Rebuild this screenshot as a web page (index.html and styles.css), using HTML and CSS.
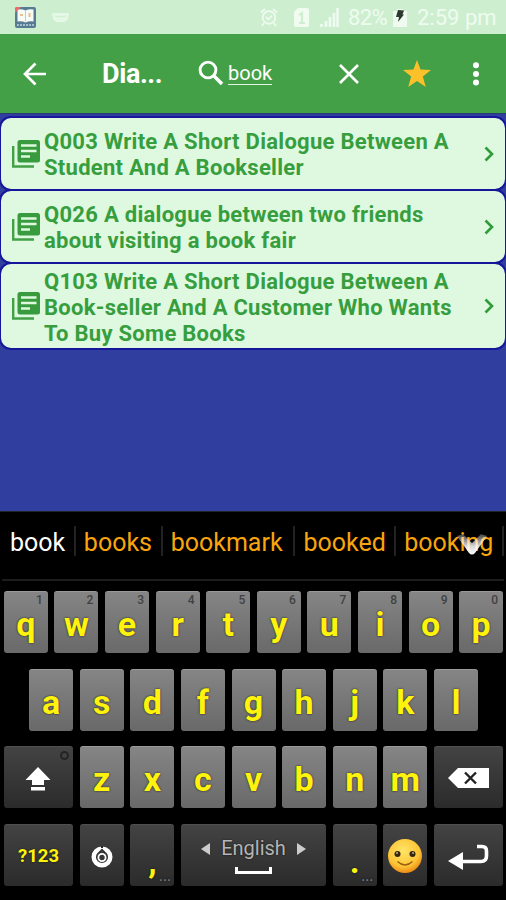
FILE: index.html
```html
<!DOCTYPE html>
<html lang="en">
<head>
    <meta charset="UTF-8">
    <title>Dialogue</title>
    <link rel="stylesheet" href="styles.css">
</head>
<body>
<svg class="defs">
    <symbol id="pages" viewBox="0 0 28 28">
        <path d="M1.200 6v20.500H22" fill="none" stroke="#43a047" stroke-width="2.400"/>
        <rect x="5.500" y="0" width="22.500" height="22.500" rx="2.500" fill="#389c3e"/>
        <path d="M9 5.500h15.500M9 11h15.500M9 16.500h9" stroke="#dff8e0" stroke-width="2.300"/>
    </symbol>
    <symbol id="next" viewBox="0 0 10 16">
        <path d="M1.500 1.500L8 8l-6.500 6.500" fill="none" stroke="#2f9c38" stroke-width="2.600"/>
    </symbol>
</svg>

<div class="status">
    <svg class="app-icon" width="21" height="21" viewBox="0 0 21 21">
        <rect width="21" height="21" rx="2" fill="#587b94"/>
        <path d="M2.500 2.500q4-1 8 1 4-2 8-1v12q-4-1-8 1-4-2-8-1z" fill="#f7fbf5"/>
        <path d="M10.500 3.500v11" stroke="#b9ccd2"/>
        <path d="M0 2q0-2 2-2h4L0 6z" fill="#ee6a66"/>
        <path d="M5 8h3M14.500 6v4" stroke="#e9c08c" stroke-width="2"/>
        <path d="M2 18h17" stroke="#a3bfce" stroke-width="2" stroke-dasharray="2 1"/>
    </svg>
    <svg class="mail-icon" width="17" height="11" viewBox="0 0 17 11">
        <path d="M0 1h17l-1 6-3 3H4L1 7z" fill="#e4f8e5"/>
        <path d="M3 4q5.500 2 11 0" fill="none" stroke="#cdefcf"/>
    </svg>
    <div class="status-right">
        <svg width="18" height="20" viewBox="0 0 18 20">
            <g fill="none" stroke="#effbf0" stroke-width="1.800">
                <circle cx="9" cy="10.500" r="6.300"/>
                <path d="M1 5.500l4-3.500M17 5.500L13 2M4 16l-2 3M14 16l2 3M6 10l2.500 2.500L12 8.500"/>
            </g>
        </svg>
        <svg class="sim" width="15" height="19" viewBox="0 0 15 19">
            <path d="M4 0h9q2 0 2 2v15q0 2-2 2H2q-2 0-2-2V4z" fill="#f1fcf1"/>
            <path d="M5 7l3-2v10M5 15h6" fill="none" stroke="#cdefcf" stroke-width="2"/>
        </svg>
        <svg class="signal" width="19" height="19" viewBox="0 0 19 19">
            <path d="M1.500 16v3M6 13v6M10 9v10M14 5v14M17.500 0v19" stroke="#effbf0" stroke-width="2.600"/>
        </svg>
        <span class="percent">82%</span>
        <svg class="battery" width="14" height="19" viewBox="0 0 14 19">
            <path d="M4 1h6v2h4v16H0V3h4z" fill="#effbf0"/>
            <path d="M5 2l6 .500-1.500 4H11L5 14l1-5H3z" fill="#2b3a2c"/>
        </svg>
        <span class="clock">2:59 pm</span>
    </div>
</div>

<div class="toolbar">
    <svg class="back" width="24" height="24" viewBox="0 0 24 24">
        <path d="M23 12H2M12.500 1.500L2 12l10.500 10.500" fill="none" stroke="#fff" stroke-width="2.700"/>
    </svg>
    <h1>Dia...</h1>
    <svg class="search" width="26" height="26" viewBox="0 0 26 26">
        <circle cx="10" cy="10" r="7.900" fill="none" stroke="#fff" stroke-width="2.900"/>
        <path d="M15.500 15.500l8.500 8.500" stroke="#fff" stroke-width="3.500"/>
    </svg>
    <span class="query">book</span>
    <svg class="clear" width="20" height="20" viewBox="0 0 20 20">
        <path d="M1 1l18 18M19 1L1 19" stroke="#fff" stroke-width="2.600"/>
    </svg>
    <svg class="star" width="28" height="27" viewBox="0 0 28 27">
        <path d="M14 0l3.500 9.500 10.500.500-8.200 6.500L22.800 27 14 21 5.200 27l3-10.500L0 10l10.500-.500z" fill="#fcc02b"/>
    </svg>
    <svg class="more" width="6" height="24" viewBox="0 0 6 24">
        <g fill="#fff"><circle cx="3" cy="3.200" r="3"/><circle cx="3" cy="12" r="3"/><circle cx="3" cy="20.500" r="3"/></g>
    </svg>
</div>

<ul class="list">
    <li>
        <svg class="pages"><use href="#pages"/></svg>
        <p>Q003 Write A Short Dialogue Between A<br>Student And A Bookseller</p>
        <svg class="next"><use href="#next"/></svg>
    </li>
    <li>
        <svg class="pages"><use href="#pages"/></svg>
        <p>Q026 A dialogue between two friends<br>about visiting a book fair</p>
        <svg class="next"><use href="#next"/></svg>
    </li>
    <li class="tall">
        <svg class="pages"><use href="#pages"/></svg>
        <p>Q103 Write A Short Dialogue Between A<br>Book-seller And A Customer Who Wants<br>To Buy Some Books</p>
        <svg class="next"><use href="#next"/></svg>
    </li>
</ul>

<div class="keyboard">
    <div class="suggest">
        <span class="w1 typed">book</span>
        <span class="w2">books</span>
        <span class="w3">bookmark</span>
        <span class="w4">booked</span>
        <span class="w5">booking
            <svg class="expand" width="36" height="24" viewBox="0 0 36 24">
                <defs>
                    <linearGradient id="fade" x1="0" y1="0" x2="0" y2="1">
                        <stop offset="0" stop-color="#fff" stop-opacity=".25"/>
                        <stop offset=".6" stop-color="#fff" stop-opacity=".85"/>
                        <stop offset="1" stop-color="#fff"/>
                    </linearGradient>
                </defs>
                <path d="M3 3l6-2 9 9 9-9 6 2-12 17q-3 3-6 0z" fill="url(#fade)"/>
            </svg>
        </span>
    </div>
    <div class="row">
        <div class="key">q<sup>1</sup></div>
        <div class="key">w<sup>2</sup></div>
        <div class="key">e<sup>3</sup></div>
        <div class="key">r<sup>4</sup></div>
        <div class="key">t<sup>5</sup></div>
        <div class="key">y<sup>6</sup></div>
        <div class="key">u<sup>7</sup></div>
        <div class="key">i<sup>8</sup></div>
        <div class="key">o<sup>9</sup></div>
        <div class="key">p<sup>0</sup></div>
    </div>
    <div class="row">
        <div class="key">a</div>
        <div class="key">s</div>
        <div class="key">d</div>
        <div class="key">f</div>
        <div class="key">g</div>
        <div class="key">h</div>
        <div class="key">j</div>
        <div class="key">k</div>
        <div class="key">l</div>
    </div>
    <div class="row">
        <div class="key dark wide">
            <svg width="26" height="26" viewBox="0 0 26 26">
                <path d="M13 1l12.500 13H19v5H7v-5H.500zM6 21h14v3.500H6z" fill="#fff"/>
            </svg>
            <i class="lamp"></i>
        </div>
        <div class="key">z</div>
        <div class="key">x</div>
        <div class="key">c</div>
        <div class="key">v</div>
        <div class="key">b</div>
        <div class="key">n</div>
        <div class="key">m</div>
        <div class="key dark wide">
            <svg class="delete" width="41" height="20" viewBox="0 0 41 20">
                <path d="M0 10L10 0h31v20H10z" fill="#fff"/>
                <path d="M17 4.500l11 11M28 4.500l-11 11" stroke="#222" stroke-width="2.400"/>
            </svg>
        </div>
    </div>
    <div class="row">
        <div class="key dark wide num">?123</div>
        <div class="key dark">
            <svg class="gear" width="22" height="22" viewBox="0 0 22 22">
                <circle cx="11" cy="11" r="8.300" fill="none" stroke="#fff" stroke-width="4.400"/>
                <circle cx="11" cy="11.500" r="3.600" fill="none" stroke="#fff" stroke-width="1.800"/>
                <path d="M8 6.800L11 3.500l3 3.300" fill="none" stroke="#292929" stroke-width="1.400"/>
                <path d="M11 0v2" stroke="#292929" stroke-width="2"/>
            </svg>
        </div>
        <div class="key dark comma">,<small>...</small></div>
        <div class="key dark space">
            <div class="lang">
                <svg width="9" height="12" viewBox="0 0 9 12"><path d="M9 0v12L0 6z" fill="#ccc"/></svg>
                <span>English</span>
                <svg width="9" height="12" viewBox="0 0 9 12"><path d="M0 0v12l9-6z" fill="#ccc"/></svg>
            </div>
            <svg class="bar" width="37" height="8" viewBox="0 0 37 8"><path d="M1.500 0v5.500h34V0" fill="none" stroke="#fff" stroke-width="3"/></svg>
        </div>
        <div class="key dark dot">.<small>...</small></div>
        <div class="key dark">
            <svg class="smile" width="34" height="34" viewBox="0 0 34 34">
                <defs>
                    <radialGradient id="face" cx=".45" cy=".35" r=".65">
                        <stop offset="0" stop-color="#ffe567"/>
                        <stop offset=".7" stop-color="#fdc536"/>
                        <stop offset="1" stop-color="#ed8b16"/>
                    </radialGradient>
                </defs>
                <circle cx="17" cy="17" r="17" fill="url(#face)"/>
                <circle cx="9.500" cy="15" r="3" fill="#36250f"/>
                <circle cx="24.500" cy="15" r="3" fill="#36250f"/>
                <circle cx="9" cy="14" r="1" fill="#bfae8b"/>
                <circle cx="25" cy="14" r="1" fill="#bfae8b"/>
                <path d="M9.500 22.500q7.500 7 15 0" fill="none" stroke="#9a5d12" stroke-width="1.500"/>
            </svg>
        </div>
        <div class="key dark wide">
            <svg class="enter" width="42" height="27" viewBox="0 0 42 27">
                <path d="M0 17L15 8v18z" fill="#fff"/>
                <path d="M13 17.500h20q5.500 0 5.500-5.500V7q0-4.500-4.500-4.500h-5" fill="none" stroke="#fff" stroke-width="3.600"/>
            </svg>
        </div>
    </div>
</div>
</body>
</html>
```
FILE: styles.css
```css
*{
    margin: 0;
    padding: 0;
    box-sizing: border-box;
    list-style: none;
}
body{
    width: 506px;
    height: 900px;
    overflow: hidden;
    display: flex;
    flex-direction: column;
    background: #303f9f;
    font-family: Roboto, "Liberation Sans", sans-serif;
}
svg{
    display: block;
    flex: none;
}
.defs{
    display: none;
}
/* status bar */
.status{
    height: 34px;
    padding: 0 11px 0 15px;
    display: flex;
    align-items: center;
    background: #cdefcf;
    color: #effbf0;
    font-size: 22px;
}
.mail-icon{
    margin-left: 16px;
}
.status-right{
    margin-left: auto;
    display: flex;
    align-items: center;
    line-height: 36px;
    white-space: nowrap;
}
.sim{
    margin-left: 16px;
}
.signal{
    margin-left: 11px;
}
.percent{
    width: 40px;
    margin-left: 9px;
    padding-top: 2px;
    letter-spacing: -.6px;
}
.battery{
    margin-left: 5px;
}
.clock{
    width: 78px;
    margin-left: 10px;
    padding-top: 2px;
}
/* toolbar */
.toolbar{
    height: 79px;
    padding-left: 23px;
    display: flex;
    align-items: center;
    background: #43a047;
    color: #fff;
}
.toolbar h1{
    width: 60px;
    margin-left: 55px;
    padding-top: 1px;
    font-size: 27px;
    font-weight: 700;
    letter-spacing: -.4px;
    white-space: nowrap;
}
.search{
    margin-left: 36px;
    margin-top: -2px;
}
.query{
    width: 44px;
    margin-left: 4px;
    margin-top: 1px;
    border-bottom: 1px solid #dff3df;
    font-size: 20px;
    line-height: 21px;
}
.clear{
    margin-left: 67px;
}
.star{
    margin-left: 44px;
}
.more{
    margin-left: 42px;
}
/* results */
.list{
    height: 398px;
    padding: 4px 1px 0;
    border-top: 1px solid #263a74;
    background: #303f9f;
}
.list li{
    height: 71px;
    margin-bottom: 2px;
    padding: 0 11px;
    display: flex;
    align-items: center;
    border-radius: 10px;
    background: #dff8e0;
    box-shadow: 0 0 0 2px #15169a;
}
.list .tall{
    height: 84px;
}
.list p{
    flex: 1;
    margin-left: 4px;
    padding-top: 3px;
    color: #379e3e;
    font-size: 22px;
    line-height: 26px;
    font-weight: 700;
    letter-spacing: .28px;
    white-space: nowrap;
}
.pages{
    width: 28px;
    height: 28px;
}
.next{
    width: 10px;
    height: 16px;
}
/* keyboard */
.keyboard{
    height: 389px;
    border-top: 1px solid #222;
    background: #000;
}
.suggest{
    height: 69px;
    margin: 0 2px 10px;
    display: flex;
    border-bottom: 2px solid #1d1d1d;
    color: #f9a50d;
    font-size: 25px;
    line-height: 33px;
}
.suggest span{
    height: 30px;
    margin-top: 14px;
    padding-left: 8px;
    border-right: 2px solid #222;
    white-space: nowrap;
}
.suggest .typed{
    color: #fff;
}
.w1{ width: 74px; }
.w2{ width: 87px; }
.w3{ width: 133px; }
.w4{ width: 101px; }
.w5{ width: 108px; position: relative; }
.expand{
    position: absolute;
    top: 7px;
    left: 58px;
}
.row{
    margin-bottom: 15.7px;
    padding-left: 1px;
    display: flex;
    justify-content: center;
    gap: 6.6px;
}
.key{
    position: relative;
    width: 44px;
    height: 62px;
    padding-top: 3px;
    display: flex;
    align-items: center;
    justify-content: center;
    border-top: 1px solid #999;
    border-radius: 3px;
    background: linear-gradient(#858585, #696969);
    color: #fff30d;
    font-size: 34px;
    line-height: 30px;
    font-weight: 700;
    text-shadow: 0 0 2px #111;
}
.key sup{
    position: absolute;
    top: 1px;
    right: 5px;
    color: #414141;
    font-size: 12px;
    line-height: 14px;
    font-weight: 500;
    text-shadow: none;
}
.dark{
    border-color: #505050;
    background: linear-gradient(#434343, #2b2b2b);
}
.wide{
    width: 69.3px;
}
.lamp{
    position: absolute;
    top: 4px;
    right: 4px;
    width: 9px;
    height: 9px;
    border: 2px solid #242424;
    border-radius: 50%;
}
.num{
    padding-top: 1px;
    font-size: 18.5px;
}
.comma,
.dot{
    padding-top: 10px;
}
.key small{
    position: absolute;
    right: 3px;
    bottom: 3px;
    color: #777;
    font-size: 12px;
    line-height: 12px;
    letter-spacing: .6px;
}
.space{
    width: 145.2px;
    padding-top: 0;
    flex-direction: column;
    font-size: 20px;
    font-weight: 400;
}
.lang{
    display: flex;
    align-items: center;
    gap: 11px;
    color: #b5b5b5;
    line-height: 25px;
}
.bar{
    margin-top: 6px;
}
.smile,
.delete{
    margin-top: -2px;
}
```
